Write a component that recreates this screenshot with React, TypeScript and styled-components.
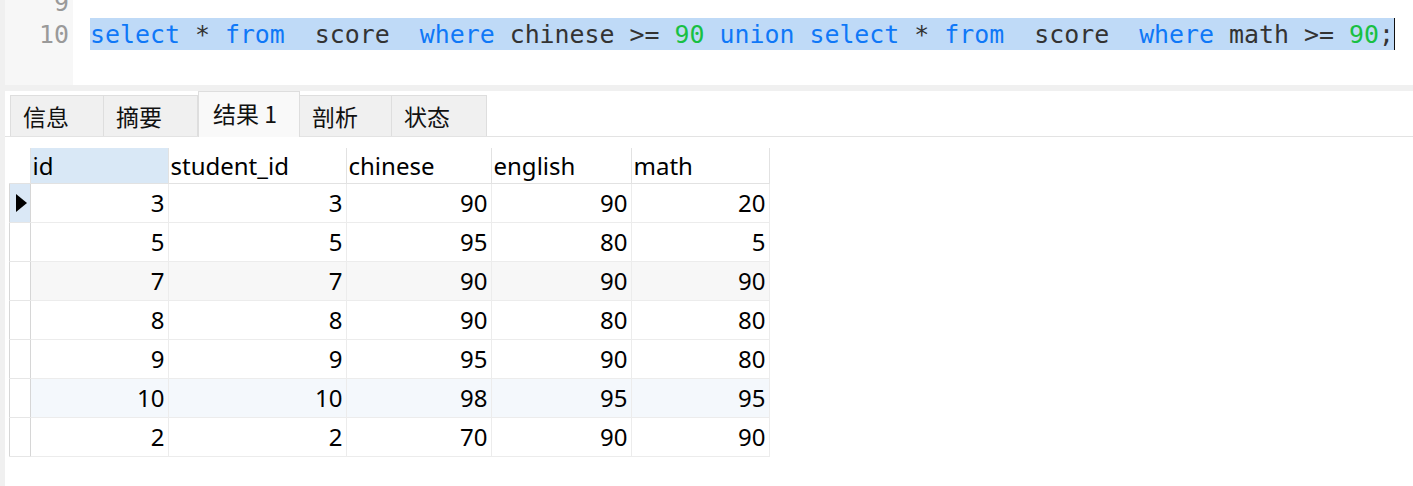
import React from "react";
import styled, { createGlobalStyle } from "styled-components";

const Global = createGlobalStyle`
  html, body { margin: 0; padding: 0; background: #f0f0f0; }
  body { width: 1413px; height: 486px; overflow: hidden; }
  #root { height: 100%; }
`;

const Page = styled.div`
  display: flex;
  flex-direction: column;
  height: 486px;
  padding-left: 5px;
  gap: 6px;
  box-sizing: border-box;
`;

const Editor = styled.div`
  display: flex;
  height: 85px;
  background: #ffffff;
  overflow: hidden;
  flex-shrink: 0;
`;

const Gutter = styled.div`
  width: 68px;
  background: #f7f7f7;
  display: flex;
  flex-direction: column;
  align-items: flex-end;
  padding-right: 4px;
  box-sizing: border-box;
  margin-top: -14px;
`;

const LineNo = styled.div`
  height: 32px;
  line-height: 34px;
  font-family: "DejaVu Sans Mono", monospace;
  font-size: 24.9px;
  color: #9a9a9a;
`;

const Code = styled.div`
  flex: 1;
  padding-left: 17px;
  margin-top: -14px;
  display: flex;
  flex-direction: column;
`;

const CodeLine = styled.div`
  height: 32px;
  line-height: 34px;
  font-family: "DejaVu Sans Mono", monospace;
  font-size: 24.9px;
  white-space: pre;
  color: #333333;
`;

const Selection = styled.span`
  background: #bfdaf7;
  display: inline-block;
  height: 32px;
  border-right: 1.5px solid #111;
`;

const Tok = styled.span<{ $kind: "kw" | "id" | "num" }>`
  color: ${(p) => (p.$kind === "kw" ? "#0f78f7" : p.$kind === "num" ? "#18c043" : "#333333")};
`;

const Results = styled.div`
  flex: 1;
  background: #ffffff;
  display: flex;
  flex-direction: column;
`;

const TabBar = styled.div`
  display: flex;
  align-items: flex-end;
  height: 46px;
  padding-left: 5px;
  border-bottom: 1px solid #e3e3e3;
  box-sizing: border-box;
  background: #ffffff;
`;

const Tab = styled.div<{ $active?: boolean; $w: number }>`
  width: ${(p) => p.$w}px;
  height: ${(p) => (p.$active ? 46 : 41)}px;
  margin-bottom: ${(p) => (p.$active ? -1 : 0)}px;
  box-sizing: border-box;
  border: 1px solid #dedede;
  border-bottom: none;
  border-left-width: ${(p) => (p.$active ? 1 : 0)}px;
  background: ${(p) => (p.$active ? "#f9f9f9" : "#f0f0f0")};
  padding-left: ${(p) => (p.$active ? 14 : 12)}px;
  padding-bottom: ${(p) => (p.$active ? 4 : 0)}px;
  display: flex;
  align-items: center;
  font-family: "Noto Sans CJK SC", "Noto Sans", sans-serif;
  font-size: 23px;
  color: #111;
  &:first-child { border-left-width: 1px; }
`;

const GridWrap = styled.div`
  padding: 11px 0 0 4px;
`;

const Table = styled.table`
  border-collapse: collapse;
  table-layout: fixed;
  font-family: "Noto Sans", "Open Sans", sans-serif;
  font-size: 24px;
  color: #000;
`;

const HeadCell = styled.th<{ $sel?: boolean; $w: number }>`
  width: ${(p) => p.$w}px;
  height: 35px;
  padding: 2px 0 0 2px;
  box-sizing: border-box;
  text-align: left;
  font-weight: normal;
  background: ${(p) => (p.$sel ? "#d9e8f6" : "#ffffff")};
  border-right: 1px solid #e2e2e2;
  border-bottom: 1px solid #e2e2e2;
  line-height: 32px;
`;

const IndHead = styled.th`
  width: 20px;
  padding: 0;
  border-bottom: 1px solid #e2e2e2;
  border-right: 1px solid #e2e2e2;
`;

const Row = styled.tr<{ $tone: "plain" | "grey" | "blue" }>`
  background: ${(p) => (p.$tone === "grey" ? "#f7f7f7" : p.$tone === "blue" ? "#f4f8fc" : "#ffffff")};
`;

const Ind = styled.td<{ $cur?: boolean }>`
  height: 39px;
  padding: 0;
  box-sizing: border-box;
  background: ${(p) => (p.$cur ? "#dae8f6" : "#ffffff")};
  border-left: 1px solid #d6d6d6;
  border-right: 1px solid #d6d6d6;
  border-bottom: 1px solid #e6e6e6;
`;

const Arrow = styled.div`
  width: 0;
  height: 0;
  margin-left: 6px;
  border-top: 9px solid transparent;
  border-bottom: 9px solid transparent;
  border-left: 11px solid #000;
`;

const Cell = styled.td`
  height: 39px;
  padding: 0 3px 0 0;
  box-sizing: border-box;
  text-align: right;
  border-right: 1px solid #ececec;
  border-bottom: 1px solid #ececec;
  line-height: 37px;
`;

const cols = [
  { name: "id", w: 138 },
  { name: "student_id", w: 178 },
  { name: "chinese", w: 145 },
  { name: "english", w: 140 },
  { name: "math", w: 138 },
];

const rows: { v: number[]; tone: "plain" | "grey" | "blue" }[] = [
  { v: [3, 3, 90, 90, 20], tone: "plain" },
  { v: [5, 5, 95, 80, 5], tone: "plain" },
  { v: [7, 7, 90, 90, 90], tone: "grey" },
  { v: [8, 8, 90, 80, 80], tone: "plain" },
  { v: [9, 9, 95, 90, 80], tone: "plain" },
  { v: [10, 10, 98, 95, 95], tone: "blue" },
  { v: [2, 2, 70, 90, 90], tone: "plain" },
];

type T = [string, "kw" | "id" | "num"];
const tokens: T[] = [
  ["select", "kw"], [" * ", "id"], ["from", "kw"], ["  score  ", "id"], ["where", "kw"],
  [" chinese >= ", "id"], ["90", "num"], [" ", "id"], ["union", "kw"], [" ", "id"],
  ["select", "kw"], [" * ", "id"], ["from", "kw"], ["  score  ", "id"], ["where", "kw"],
  [" math >= ", "id"], ["90", "num"], [";", "id"],
];

const tabs = [
  { t: "信息", w: 94 },
  { t: "摘要", w: 94 },
  { t: "结果 1", w: 102, active: true },
  { t: "剖析", w: 92 },
  { t: "状态", w: 95 },
];

export default function App() {
  return (
    <>
      <Global />
      <Page>
        <Editor>
          <Gutter>
            <LineNo>9</LineNo>
            <LineNo>10</LineNo>
          </Gutter>
          <Code>
            <CodeLine> </CodeLine>
            <CodeLine>
              <Selection>
                {tokens.map(([s, k], i) => (
                  <Tok key={i} $kind={k}>{s}</Tok>
                ))}
              </Selection>
            </CodeLine>
          </Code>
        </Editor>
        <Results>
          <TabBar>
            {tabs.map((t) => (
              <Tab key={t.t} $w={t.w} $active={t.active}>{t.t}</Tab>
            ))}
          </TabBar>
          <GridWrap>
            <Table>
              <thead>
                <tr>
                  <IndHead />
                  {cols.map((c, i) => (
                    <HeadCell key={c.name} $w={c.w} $sel={i === 0}>{c.name}</HeadCell>
                  ))}
                </tr>
              </thead>
              <tbody>
                {rows.map((r, ri) => (
                  <Row key={ri} $tone={r.tone}>
                    <Ind $cur={ri === 0}>{ri === 0 && <Arrow />}</Ind>
                    {r.v.map((v, ci) => (
                      <Cell key={ci}>{v}</Cell>
                    ))}
                  </Row>
                ))}
              </tbody>
            </Table>
          </GridWrap>
        </Results>
      </Page>
    </>
  );
}
